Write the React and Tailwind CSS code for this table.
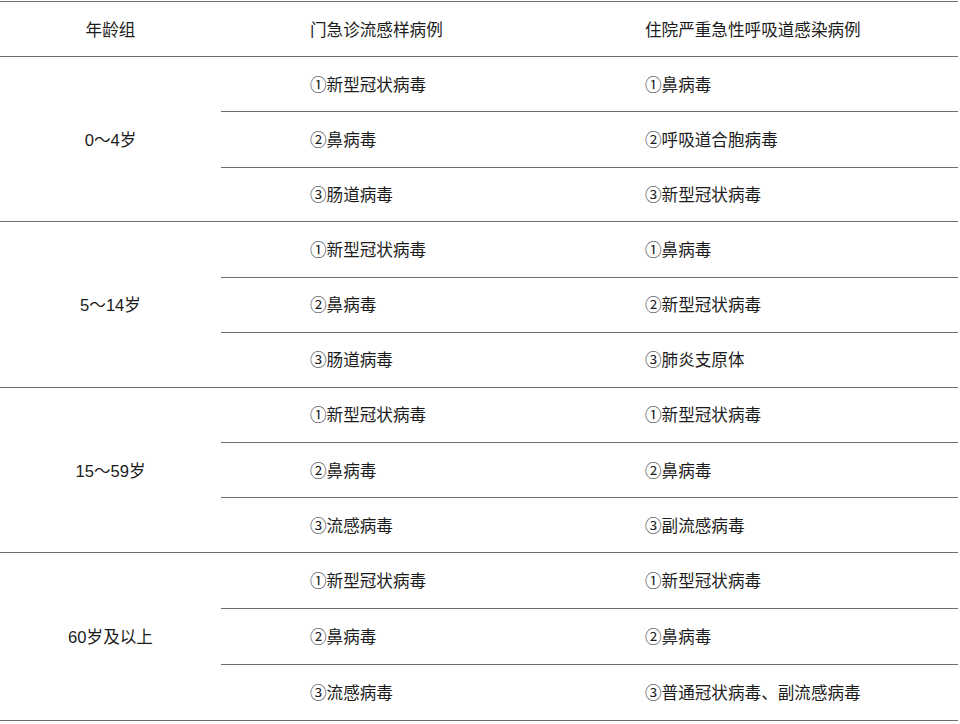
import React from 'react';

const groups = [
  {
    age: '0～4岁',
    rows: [
      ['①新型冠状病毒', '①鼻病毒'],
      ['②鼻病毒', '②呼吸道合胞病毒'],
      ['③肠道病毒', '③新型冠状病毒'],
    ],
  },
  {
    age: '5～14岁',
    rows: [
      ['①新型冠状病毒', '①鼻病毒'],
      ['②鼻病毒', '②新型冠状病毒'],
      ['③肠道病毒', '③肺炎支原体'],
    ],
  },
  {
    age: '15～59岁',
    rows: [
      ['①新型冠状病毒', '①新型冠状病毒'],
      ['②鼻病毒', '②鼻病毒'],
      ['③流感病毒', '③副流感病毒'],
    ],
  },
  {
    age: '60岁及以上',
    last: true,
    rows: [
      ['①新型冠状病毒', '①新型冠状病毒'],
      ['②鼻病毒', '②鼻病毒'],
      ['③流感病毒', '③普通冠状病毒、副流感病毒'],
    ],
  },
];

const font = { fontFamily: '"Liberation Sans", "Noto Sans CJK SC", sans-serif' };

export default function App() {
  return (
    <div className="bg-white w-[960px] h-[724px] pt-[1px]" style={font}>
      <div className="w-[958px] text-[16.6px] text-[#1c1c1c]">
        <div className="flex h-[56px] pt-[4px] border-t-[1.5px] border-b-[1.5px] border-[#6e6e6e] items-center">
          <div className="w-[221px] text-center">年龄组</div>
          <div className="w-[335px] pl-[89px]">门急诊流感样病例</div>
          <div className="flex-1 pl-[89px]">住院严重急性呼吸道感染病例</div>
        </div>
        {groups.map((g) => (
          <div key={g.age} className="flex border-b-[1.5px] border-[#6e6e6e]">
            <div className="w-[221px] pt-[4px] flex items-center justify-center">{g.age}</div>
            <div className="flex-1 flex flex-col">
              {g.rows.map((r, i) => (
                <div
                  key={i}
                  className={
                    'flex items-center pt-[4px] ' +
                    (i < 2
                      ? (g.last ? 'h-[56px] ' : 'h-[55.3px] ') + 'border-b-[1.5px] border-[#6e6e6e]'
                      : g.last ? 'h-[54.5px]' : 'h-[53.8px]')
                  }
                >
                  <div className="w-[335px] pl-[89px]">{r[0]}</div>
                  <div className="flex-1 pl-[89px]">{r[1]}</div>
                </div>
              ))}
            </div>
          </div>
        ))}
      </div>
    </div>
  );
}
